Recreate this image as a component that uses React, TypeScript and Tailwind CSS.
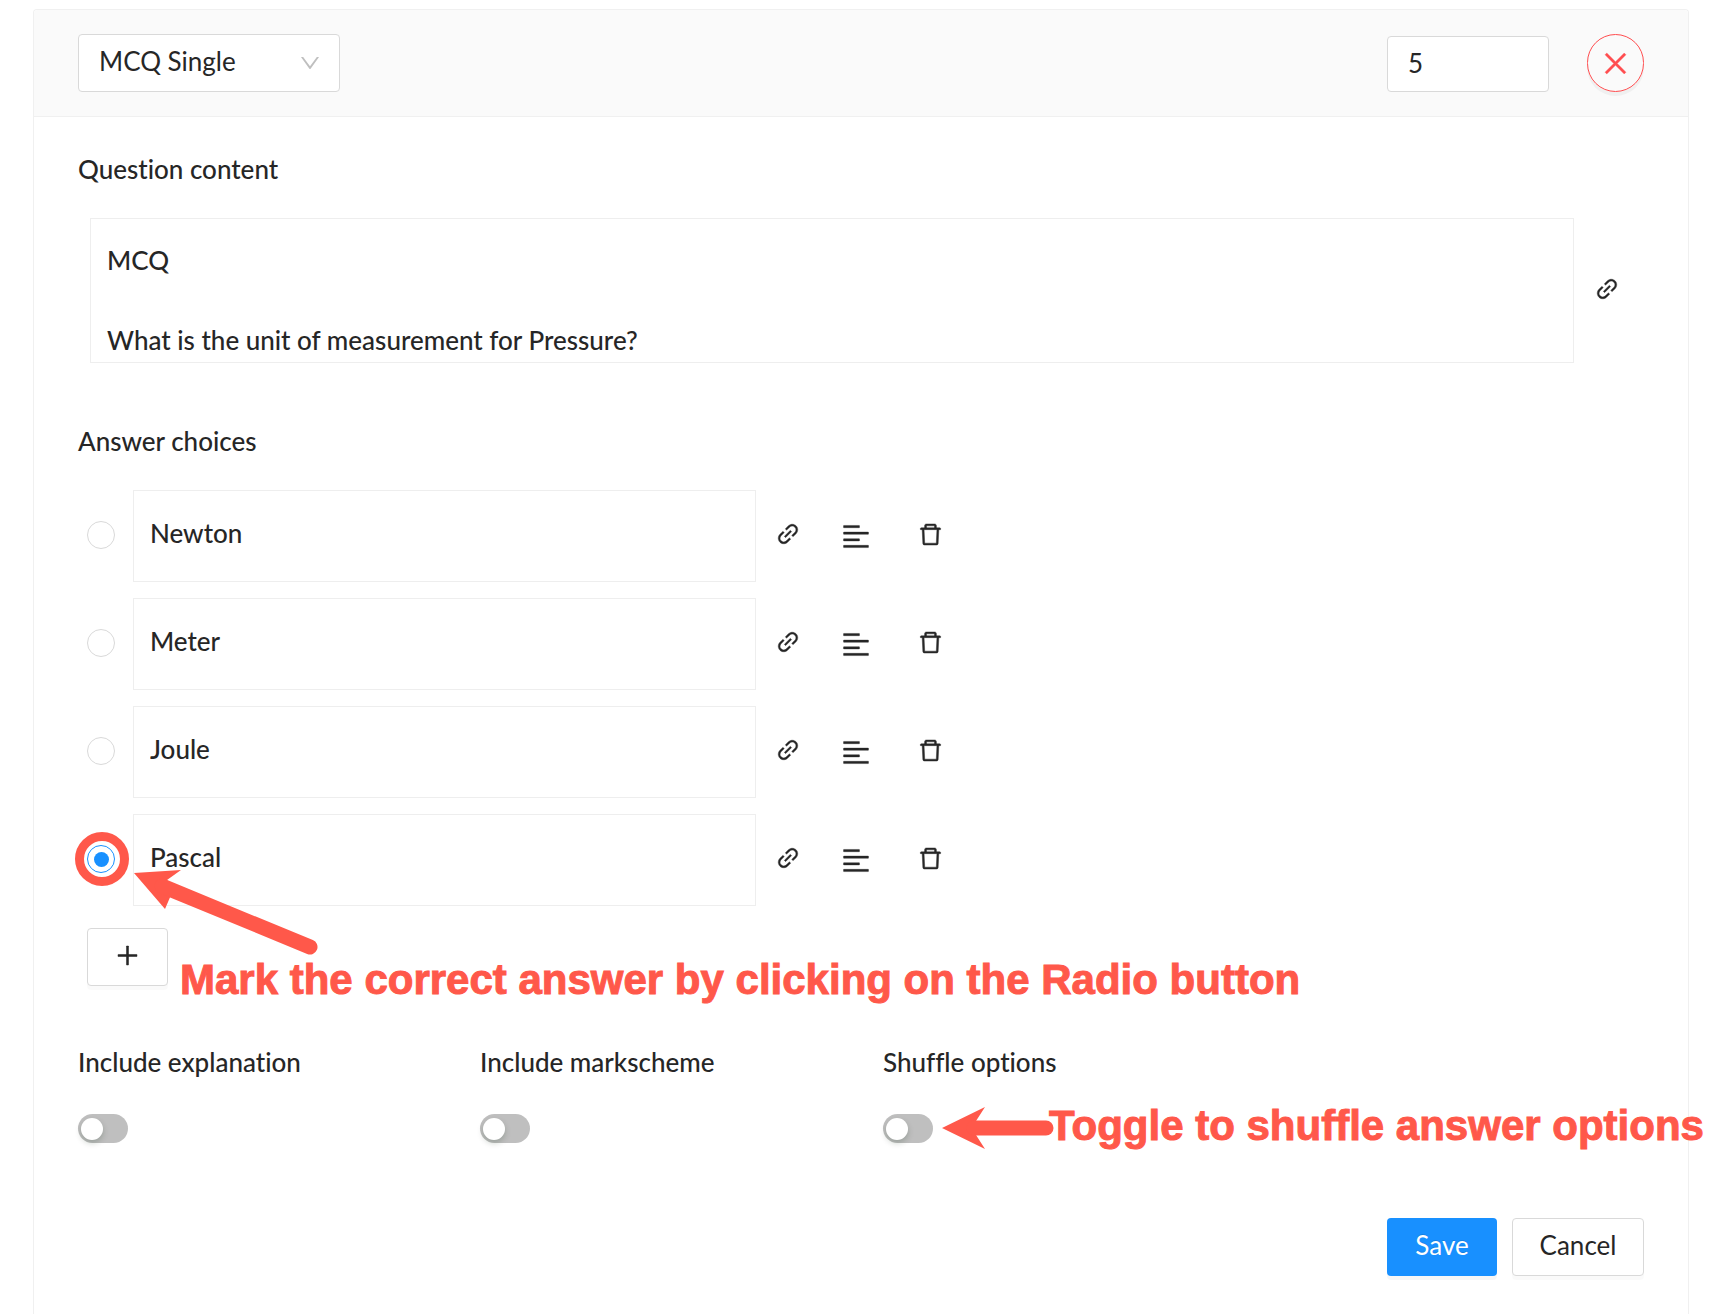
import React, { useState } from 'react'
import {
  AiOutlineAlignLeft,
  AiOutlineClose,
  AiOutlineDelete,
  AiOutlineDown,
  AiOutlineLink,
  AiOutlinePlus,
} from 'react-icons/ai'

interface Choice {
  id: string
  text: string
}

const QUESTION_TYPES = ['MCQ Single', 'MCQ Multiple', 'True / False', 'Short answer'] as const

const INITIAL_CHOICES: Choice[] = [
  { id: 'a', text: 'Newton' },
  { id: 'b', text: 'Meter' },
  { id: 'c', text: 'Joule' },
  { id: 'd', text: 'Pascal' },
]

function IconButton({ label, children }: { label: string; children: React.ReactNode }) {
  return (
    <button type="button" aria-label={label} className="flex size-8 items-center justify-center">
      {children}
    </button>
  )
}

interface ChoiceRowProps {
  choice: Choice
  checked: boolean
  onSelect: () => void
  onChange: (text: string) => void
}

function ChoiceRow({ choice, checked, onSelect, onChange }: ChoiceRowProps) {
  return (
    <li className="flex items-center">
      <div className="relative flex pb-0.5">
        <input
          type="radio"
          name="correct"
          aria-label={`Mark ${choice.text} as correct`}
          checked={checked}
          onChange={onSelect}
          className="flex size-7 appearance-none items-center justify-center rounded-full border border-[#d9d9d9] bg-white checked:border-[#1890ff] checked:before:size-[15px] checked:before:rounded-full checked:before:bg-[#1890ff]"
        />
        {checked && (
          <span className="pointer-events-none absolute -top-[13px] -left-3 size-[54px] rounded-full border-9 border-[#ff584a]" />
        )}
      </div>
      <input
        type="text"
        aria-label="Answer choice"
        value={choice.text}
        onChange={(e) => onChange(e.target.value)}
        className="ml-[18px] h-[92px] w-[623px] border border-[#eee] bg-white px-4 pb-1.5 font-medium outline-none"
      />
      <div className="ml-4 flex items-center">
        <div className="flex pb-1"><IconButton label="Attach link"><AiOutlineLink size={26} strokeWidth={16} /></IconButton></div>
        <div className="ml-9 flex"><IconButton label="Add feedback"><AiOutlineAlignLeft size={33} strokeWidth={12} /></IconButton></div>
        <div className="ml-[42px] flex pb-1"><IconButton label="Delete choice"><AiOutlineDelete size={27} strokeWidth={16} /></IconButton></div>
      </div>
    </li>
  )
}

function SwitchField({ id, label, children }: { id: string; label: string; children?: React.ReactNode }) {
  return (
    <div className="flex flex-col items-start gap-8">
      <label htmlFor={id} className="font-medium leading-10">{label}</label>
      <div className="relative flex">
        <input
          id={id}
          type="checkbox"
          role="switch"
          className="flex h-[29px] w-[50px] appearance-none items-center rounded-full bg-[#bfbfbf] px-[3px] before:size-[22px] before:rounded-full before:bg-white before:shadow-[0_3px_6px_rgba(0,35,11,0.2)] checked:justify-end checked:bg-[#1890ff]"
        />
        {children}
      </div>
    </div>
  )
}

export default function App() {
  const [type, setType] = useState<string>(QUESTION_TYPES[0])
  const [marks, setMarks] = useState('5')
  const [content, setContent] = useState('MCQ\n\nWhat is the unit of measurement for Pressure?')
  const [choices, setChoices] = useState(INITIAL_CHOICES)
  const [correct, setCorrect] = useState('d')

  const updateChoice = (id: string, text: string) => {
    setChoices((prev) => prev.map((c) => (c.id === id ? { ...c, text } : c)))
  }

  return (
    <div className="flex min-h-screen flex-col overflow-x-hidden bg-white pt-[9px] pr-[21px] pl-[33px] font-['Lato','Noto_Sans',sans-serif] text-[26px] text-[#262626] [font-variant-ligatures:none]">
      <form className="flex grow flex-col rounded-t border border-b-0 border-[#f0f0f0]" onSubmit={(e) => e.preventDefault()}>
        <header className="flex items-center justify-between rounded-t border-b border-[#f0f0f0] bg-[#fafafa] px-11 py-6">
          <div className="relative">
            <select
              aria-label="Question type"
              value={type}
              onChange={(e) => setType(e.target.value)}
              className="h-[58px] w-[262px] appearance-none rounded border border-[#d9d9d9] bg-white px-5 pb-1 outline-none"
            >
              {QUESTION_TYPES.map((t) => <option key={t} value={t}>{t}</option>)}
            </select>
            <AiOutlineDown size={24} className="pointer-events-none absolute top-[17px] right-[18px] text-[#bfbfbf]" />
          </div>
          <div className="flex items-end gap-[38px]">
            <input
              type="text"
              inputMode="numeric"
              aria-label="Marks"
              value={marks}
              onChange={(e) => setMarks(e.target.value)}
              className="h-14 w-[162px] rounded border border-[#d9d9d9] bg-white px-5 pb-0.5 outline-none"
            />
            <button
              type="button"
              aria-label="Remove question"
              className="flex h-[58px] w-[57px] items-center justify-center rounded-full border border-[#ff4d4f] text-[#ff4d4f] shadow-[0_4px_0_rgba(0,0,0,0.04)]"
            >
              <AiOutlineClose size={31} strokeWidth={12} />
            </button>
          </div>
        </header>

        <div className="flex flex-col px-11 pt-8 pb-9">
          <label htmlFor="content" className="font-medium leading-10">Question content</label>
          <div className="mt-[29px] flex items-center pr-[21px] pl-3">
            <textarea
              id="content"
              value={content}
              onChange={(e) => setContent(e.target.value)}
              className="h-[145px] grow resize-none overflow-hidden border border-[#eee] bg-white px-4 pt-[21px] font-medium leading-10 outline-none"
            />
            <div className="ml-[17px] flex pb-1">
              <IconButton label="Attach link to question"><AiOutlineLink size={26} strokeWidth={16} /></IconButton>
            </div>
          </div>

          <h2 className="mt-[58px] font-medium leading-10">Answer choices</h2>
          <ul className="mt-[29px] flex flex-col gap-4 pl-[9px]">
            {choices.map((c) => (
              <ChoiceRow
                key={c.id}
                choice={c}
                checked={correct === c.id}
                onSelect={() => setCorrect(c.id)}
                onChange={(text) => updateChoice(c.id, text)}
              />
            ))}
          </ul>

          <div className="relative mt-[22px] flex pl-[9px]">
            <button
              type="button"
              aria-label="Add choice"
              onClick={() => setChoices((prev) => [...prev, { id: String(prev.length), text: '' }])}
              className="flex h-[58px] w-[81px] items-center justify-center rounded border border-[#d9d9d9] bg-white pb-1 shadow-[0_4px_0_rgba(0,0,0,0.02)]"
            >
              <AiOutlinePlus size={27} strokeWidth={20} />
            </button>
            <svg
              aria-hidden="true"
              viewBox="0 0 190 90"
              className="pointer-events-none absolute -top-[59px] left-[52px] h-[90px] w-[190px] text-[#ff584a]"
            >
              <path d="M4 4 51 1 37 11 41 26 35 40Z" fill="currentColor" />
              <path d="M32 17 180 78" stroke="currentColor" strokeWidth="15" strokeLinecap="round" />
            </svg>
            <p className="absolute top-7 left-[102px] font-['Liberation_Sans',Arial,sans-serif] text-[42px] leading-12 font-bold whitespace-nowrap text-[#ff584a] [-webkit-text-stroke:1px_#ff584a]">
              Mark the correct answer by clicking on the Radio button
            </p>
          </div>

          <div className="mt-14 grid grid-cols-[402px_403px_1fr]">
            <SwitchField id="explanation" label="Include explanation" />
            <SwitchField id="markscheme" label="Include markscheme" />
            <SwitchField id="shuffle" label="Shuffle options">
              <svg
                aria-hidden="true"
                viewBox="0 0 114 44"
                className="pointer-events-none absolute -top-2 left-[59px] h-11 w-[114px] text-[#ff584a]"
              >
                <path d="M0 22 43 1 34 15V29L43 43Z" fill="currentColor" />
                <path d="M32 22H104" stroke="currentColor" strokeWidth="15" strokeLinecap="round" />
              </svg>
              <p className="absolute -top-3 left-[166px] font-['Liberation_Sans',Arial,sans-serif] text-[42px] leading-12 font-bold whitespace-nowrap text-[#ff584a] [-webkit-text-stroke:1px_#ff584a]">
                Toggle to shuffle answer options
              </p>
            </SwitchField>
          </div>

          <div className="mt-[75px] flex justify-end gap-[15px]">
            <button
              type="submit"
              className="h-[58px] w-[110px] rounded bg-[#1890ff] pb-1 text-white shadow-[0_4px_0_rgba(0,0,0,0.03)] [text-shadow:0_-1px_0_rgba(0,0,0,0.12)]"
            >
              Save
            </button>
            <button
              type="button"
              className="h-[58px] w-[132px] rounded border border-[#d9d9d9] bg-white pb-1 shadow-[0_4px_0_rgba(0,0,0,0.02)]"
            >
              Cancel
            </button>
          </div>
        </div>
      </form>
    </div>
  )
}
